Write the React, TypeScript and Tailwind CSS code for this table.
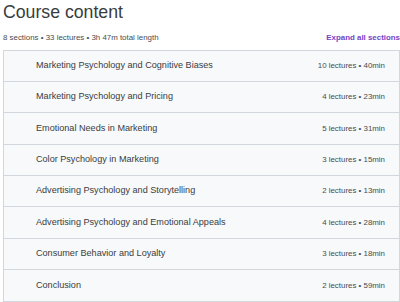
export default function App() {
  const sections = [
    { title: "Marketing Psychology and Cognitive Biases", meta: "10 lectures • 40min" },
    { title: "Marketing Psychology and Pricing", meta: "4 lectures • 23min" },
    { title: "Emotional Needs in Marketing", meta: "5 lectures • 31min" },
    { title: "Color Psychology in Marketing", meta: "3 lectures • 15min" },
    { title: "Advertising Psychology and Storytelling", meta: "2 lectures • 13min" },
    { title: "Advertising Psychology and Emotional Appeals", meta: "4 lectures • 28min" },
    { title: "Consumer Behavior and Loyalty", meta: "3 lectures • 18min" },
    { title: "Conclusion", meta: "2 lectures • 59min" },
  ];

  return (
    <div className="h-[302px] w-[400px] overflow-hidden bg-white font-['Liberation_Sans',Arial,sans-serif] text-[#2d2f31]">
      <h2 className="pl-[3px] pt-[1px] text-[17.7px] leading-[22px] text-[#3a3c3e]">Course content</h2>
      <div className="mt-[9px] flex items-center justify-between pl-[3px]">
        <span className="text-[7.9px] text-[#4a4c4e]">8 sections • 33 lectures • 3h 47m total length</span>
        <span className="text-[7.9px] font-bold text-[#7443c6]">Expand all sections</span>
      </div>
      <div className="ml-[3px] mt-[6px] border border-[#d1d7dc]">
        {sections.map((s, i) => (
          <div
            key={s.title}
            className={`flex h-[31.3px] items-center justify-between bg-[#f7f9fa] pl-[32px] pr-[14px] ${
              i < sections.length - 1 ? "border-b border-[#d1d7dc]" : ""
            }`}
          >
            <span className="text-[9.1px] text-[#3a3c3e]">{s.title}</span>
            <span className="text-[7.9px] text-[#4a4c4e]">{s.meta}</span>
          </div>
        ))}
      </div>
    </div>
  );
}
